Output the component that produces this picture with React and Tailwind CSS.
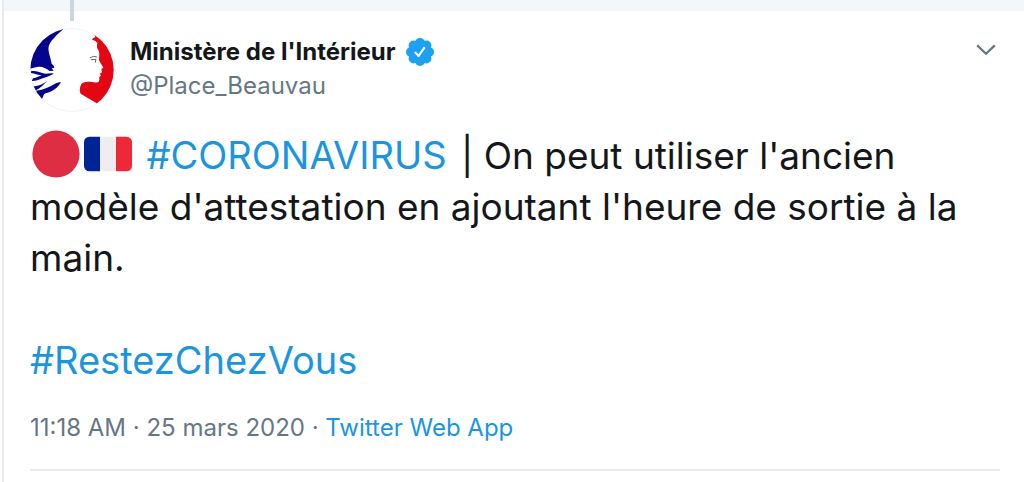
import React from "react";

function Avatar() {
  return (
    <svg viewBox="15 9 252 252" className="size-[84px] shrink-0" role="img" aria-label="Ministère de l'Intérieur">
      <defs>
        <clipPath id="avatar-disc">
          <circle cx="141" cy="135" r="125" />
        </clipPath>
      </defs>
      <circle cx="141" cy="135" r="124.5" fill="#fff" stroke="#edf0f2" strokeWidth="2.5" />
      <g clipPath="url(#avatar-disc)">
        <path d="M0 0H130C112 16 98 26 88 38C76 50 68 62 71 78C73 92 78 104 80 116L86 122L88 128L80 130L86 137L74 138C62 130 52 124 38 126C28 127 22 131 10 131Z" fill="#04048c" />
        <path d="M18 139C32 136 42 142 54 145C66 148 78 142 86 146C76 151 68 155 58 158C46 162 34 168 20 168L24 160C34 158 44 154 50 151C40 150 28 146 18 144Z" fill="#04048c" />
        <path d="M26 184C42 184 54 176 68 168C56 178 46 190 30 197C48 197 62 191 78 183C90 176 96 172 108 171C102 184 90 195 76 200C68 203 60 204 57 208L50 224L10 240V184Z" fill="#04048c" />
        <path d="M207 24L280 24V270H230L215 235L167 206C163 200 164 186 169 177C175 170 190 169 200 171C210 173 220 174 222 168C224 162 222 159 223 156L228 151L224 147L231 142L229 132L235 128C230 118 224 112 222 105C222 95 225 84 220 75C214 69 216 60 217 54L212 49L200 43L211 36Z" fill="#e30613" />
      </g>
      <g fill="none" stroke="#666" strokeLinecap="round">
        <path d="M196 98L206 94L215 96" strokeWidth="3" />
        <path d="M199 104L213 103L211 112" strokeWidth="3" />
      </g>
    </svg>
  );
}

function VerifiedBadge() {
  return (
    <svg viewBox="0 0 28 28" className="size-7 shrink-0" role="img" aria-label="Compte certifié">
      <g fill="#1da1f2">
        <circle cx="14" cy="14" r="11" />
        <circle cx="14" cy="5" r="5" />
        <circle cx="20.4" cy="7.6" r="5" />
        <circle cx="23" cy="14" r="5" />
        <circle cx="20.4" cy="20.4" r="5" />
        <circle cx="14" cy="23" r="5" />
        <circle cx="7.6" cy="20.4" r="5" />
        <circle cx="5" cy="14" r="5" />
        <circle cx="7.6" cy="7.6" r="5" />
      </g>
      <path d="M9.4 14.6L12.6 18L18.2 9.8" fill="none" stroke="#fff" strokeWidth="2.1" strokeLinecap="round" strokeLinejoin="round" />
    </svg>
  );
}

function RedCircle() {
  return (
    <svg viewBox="0 0 48 48" className="ml-0.5 inline-block size-12 align-[-9px]" role="img" aria-label="Rond rouge">
      <circle cx="24" cy="24" r="23.6" fill="#dd2e44" />
    </svg>
  );
}

function FrenchFlag() {
  return (
    <svg viewBox="0 0 48 48" className="ml-1 inline-block size-12 align-[-9px]" role="img" aria-label="Drapeau français">
      <path d="M5.3 6.7A5.3 5.3 0 0 0 0 12V36a5.3 5.3 0 0 0 5.3 5.3H16V6.7Z" fill="#002495" />
      <path d="M16 6.7H32V41.3H16Z" fill="#eee" />
      <path d="M42.7 6.7H32V41.3H42.7A5.3 5.3 0 0 0 48 36V12a5.3 5.3 0 0 0-5.3-5.3Z" fill="#ed2939" />
    </svg>
  );
}

export default function App() {
  return (
    <div className="min-h-screen bg-white pl-0.5 font-['Inter','Liberation_Sans',sans-serif] text-[#14171a]">
      <div className="min-h-screen border-l-2 border-[#e6ecf0]">
        <div className="h-[11px] bg-[#f3f7fa] pl-[66px]">
          <div className="h-[21px] w-1 bg-[#ccd6dd]" />
        </div>
        <article className="pr-6 pl-[26px]">
          <header className="flex items-start pt-[17px]">
            <Avatar />
            <div className="ml-4 min-w-0 flex-1 pt-[7px]">
              <div className="flex items-center gap-2.5">
                <a href="#profil" className="text-2xl leading-[34px] font-bold">Ministère de l'Intérieur</a>
                <VerifiedBadge />
              </div>
              <a href="#profil" className="block text-2xl leading-[34px] text-[#657786]">@Place_Beauvau</a>
            </div>
            <button type="button" aria-label="Plus d'options" className="mt-3 p-1">
              <svg viewBox="0 0 20 12" className="h-3 w-5" fill="none" stroke="#657786" strokeWidth="2.2">
                <path d="M1.2 1.4L10 9.8L18.8 1.4" />
              </svg>
            </button>
          </header>
          <div className="mt-[18px] text-[37px] leading-[51px]">
            <p>
              <RedCircle />
              <FrenchFlag />{" "}
              <a href="#coronavirus" className="mx-1 text-[38px] text-[#1b95e0]">#CORONAVIRUS</a> | On peut utiliser l'ancien modèle d'attestation en ajoutant l'heure de sortie à la main.
            </p>
            <p className="mt-[52px]">
              <a href="#restezchezvous" className="text-[38px] text-[#1b95e0]">#RestezChezVous</a>
            </p>
          </div>
          <footer className="mt-[25px] border-b-2 border-[#e6ecf0] pb-6 text-2xl leading-[34px] text-[#657786]">
            <time dateTime="2020-03-25T11:18">11:18 AM · 25 mars 2020</time> · <a href="#source" className="text-[#1b95e0]">Twitter Web App</a>
          </footer>
        </article>
      </div>
    </div>
  );
}
